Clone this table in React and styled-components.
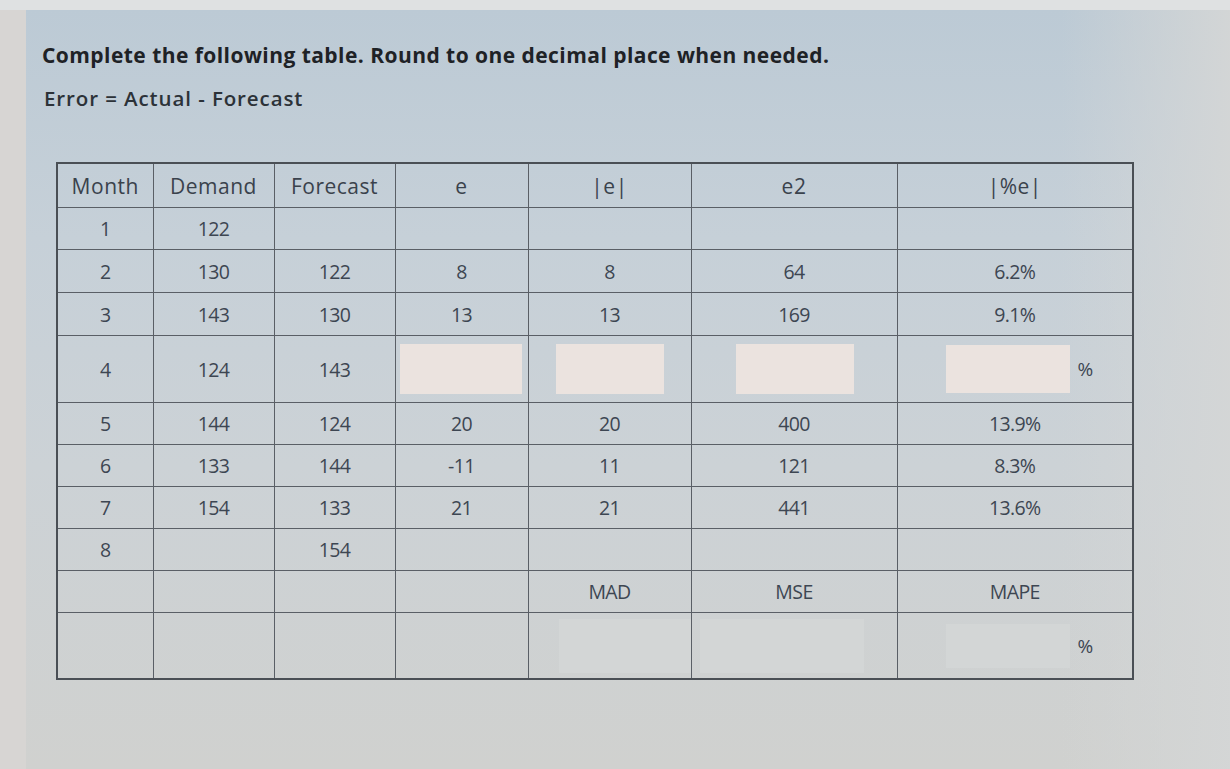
import React from 'react';
import styled, { createGlobalStyle } from 'styled-components';

const GlobalStyle = createGlobalStyle`
  html, body {
    margin: 0;
    padding: 0;
  }
  body {
    width: 1230px;
    height: 769px;
    overflow: hidden;
    font-family: "Open Sans", "Liberation Sans", sans-serif;
    background: #d7d5d3;
  }
`;

const Screen = styled.div`
  width: 1230px;
  height: 769px;
  box-sizing: border-box;
  padding-top: 10px;
  background: linear-gradient(180deg, #dfe1e2 0px, #dfe1e2 10px, transparent 10px);
`;

const Panel = styled.div`
  height: 759px;
  box-sizing: border-box;
  margin-left: 26px;
  padding: 31px 0 0 16px;
  background:
    linear-gradient(90deg, rgba(214, 214, 212, 0) 86%, rgba(212, 214, 214, 0.95) 100%),
    linear-gradient(180deg, #bccad5 0%, #c6d0d8 30%, #ccd2d6 60%, #d0d1cf 100%);
`;

const Title = styled.h1`
  margin: 0;
  font-size: 21px;
  font-weight: 700;
  color: #1e2226;
  letter-spacing: 0.45px;
  white-space: nowrap;
`;

const Formula = styled.p`
  margin: 15px 0 0 2px;
  font-size: 20.5px;
  font-weight: 600;
  color: #2c3238;
  letter-spacing: 0.9px;
`;

const Table = styled.table`
  margin: 50px 0 0 14px;
  border-collapse: collapse;
  border: 2px solid #4a4f55;
  table-layout: fixed;
  width: 1076px;
`;

const Cell = styled.td`
  border: 1.5px solid #5a5f66;
  height: ${(p) => p.$h || 41}px;
  padding: 0;
  text-align: center;
  vertical-align: middle;
  font-size: 19.5px;
  letter-spacing: -0.6px;
  color: #3d4652;
`;

const HeadCell = styled(Cell).attrs({ as: 'th' })`
  font-weight: 400;
  font-size: 21px;
  letter-spacing: 0.5px;
  color: #3a424c;
`;

const InputWrap = styled.div`
  display: flex;
  align-items: center;
  justify-content: ${(p) => (p.$left ? 'flex-start' : 'center')};
  gap: 8px;
  padding-left: ${(p) => p.$pad || 0}px;
`;

const InputBox = styled.div`
  width: ${(p) => p.$w}px;
  height: ${(p) => p.$hh || 48}px;
  background: ${(p) => (p.$faint ? '#d3d6d6' : '#ebe3df')};
`;

const Pct = styled.span`
  font-size: 19px;
  color: #3d4652;
`;

const widths = [96, 121, 121, 133, 163, 206, 236];
const heads = ['Month', 'Demand', 'Forecast', 'e', '|e|', 'e2', '|%e|'];

const rows = [
  ['1', '122', '', '', '', '', ''],
  ['2', '130', '122', '8', '8', '64', '6.2%'],
  ['3', '143', '130', '13', '13', '169', '9.1%'],
  'inputs',
  ['5', '144', '124', '20', '20', '400', '13.9%'],
  ['6', '133', '144', '-11', '11', '121', '8.3%'],
  ['7', '154', '133', '21', '21', '441', '13.6%'],
  ['8', '', '154', '', '', '', ''],
  ['', '', '', '', 'MAD', 'MSE', 'MAPE'],
  'summary',
];

export default function App() {
  return (
    <>
      <GlobalStyle />
      <Screen>
        <Panel>
          <Title>Complete the following table. Round to one decimal place when needed.</Title>
          <Formula>Error = Actual - Forecast</Formula>
          <Table>
            <colgroup>
              {widths.map((w, i) => (
                <col key={i} style={{ width: w }} />
              ))}
            </colgroup>
            <thead>
              <tr>
                {heads.map((h) => (
                  <HeadCell key={h} $h={43}>{h}</HeadCell>
                ))}
              </tr>
            </thead>
            <tbody>
              {rows.map((r, i) => {
                if (r === 'inputs') {
                  return (
                    <tr key={i}>
                      <Cell $h={66}>4</Cell>
                      <Cell>124</Cell>
                      <Cell>143</Cell>
                      <Cell>
                        <InputWrap $left $pad={4}><InputBox $w={122} $hh={50} /></InputWrap>
                      </Cell>
                      <Cell>
                        <InputWrap $left $pad={27}><InputBox $w={108} $hh={50} /></InputWrap>
                      </Cell>
                      <Cell>
                        <InputWrap $left $pad={44}><InputBox $w={118} $hh={50} /></InputWrap>
                      </Cell>
                      <Cell>
                        <InputWrap $left $pad={48}>
                          <InputBox $w={124} $hh={48} />
                          <Pct>%</Pct>
                        </InputWrap>
                      </Cell>
                    </tr>
                  );
                }
                if (r === 'summary') {
                  return (
                    <tr key={i}>
                      <Cell $h={65} />
                      <Cell />
                      <Cell />
                      <Cell />
                      <Cell>
                        <InputWrap $left $pad={30}><InputBox $faint $w={133} $hh={54} /></InputWrap>
                      </Cell>
                      <Cell>
                        <InputWrap $left $pad={8}><InputBox $faint $w={164} $hh={54} /></InputWrap>
                      </Cell>
                      <Cell>
                        <InputWrap $left $pad={48}>
                          <InputBox $faint $w={124} $hh={44} />
                          <Pct>%</Pct>
                        </InputWrap>
                      </Cell>
                    </tr>
                  );
                }
                return (
                  <tr key={i}>
                    {r.map((v, j) => (
                      <Cell key={j} $h={i === 1 || i === 2 ? 42 : 41}>{v}</Cell>
                    ))}
                  </tr>
                );
              })}
            </tbody>
          </Table>
        </Panel>
      </Screen>
    </>
  );
}
